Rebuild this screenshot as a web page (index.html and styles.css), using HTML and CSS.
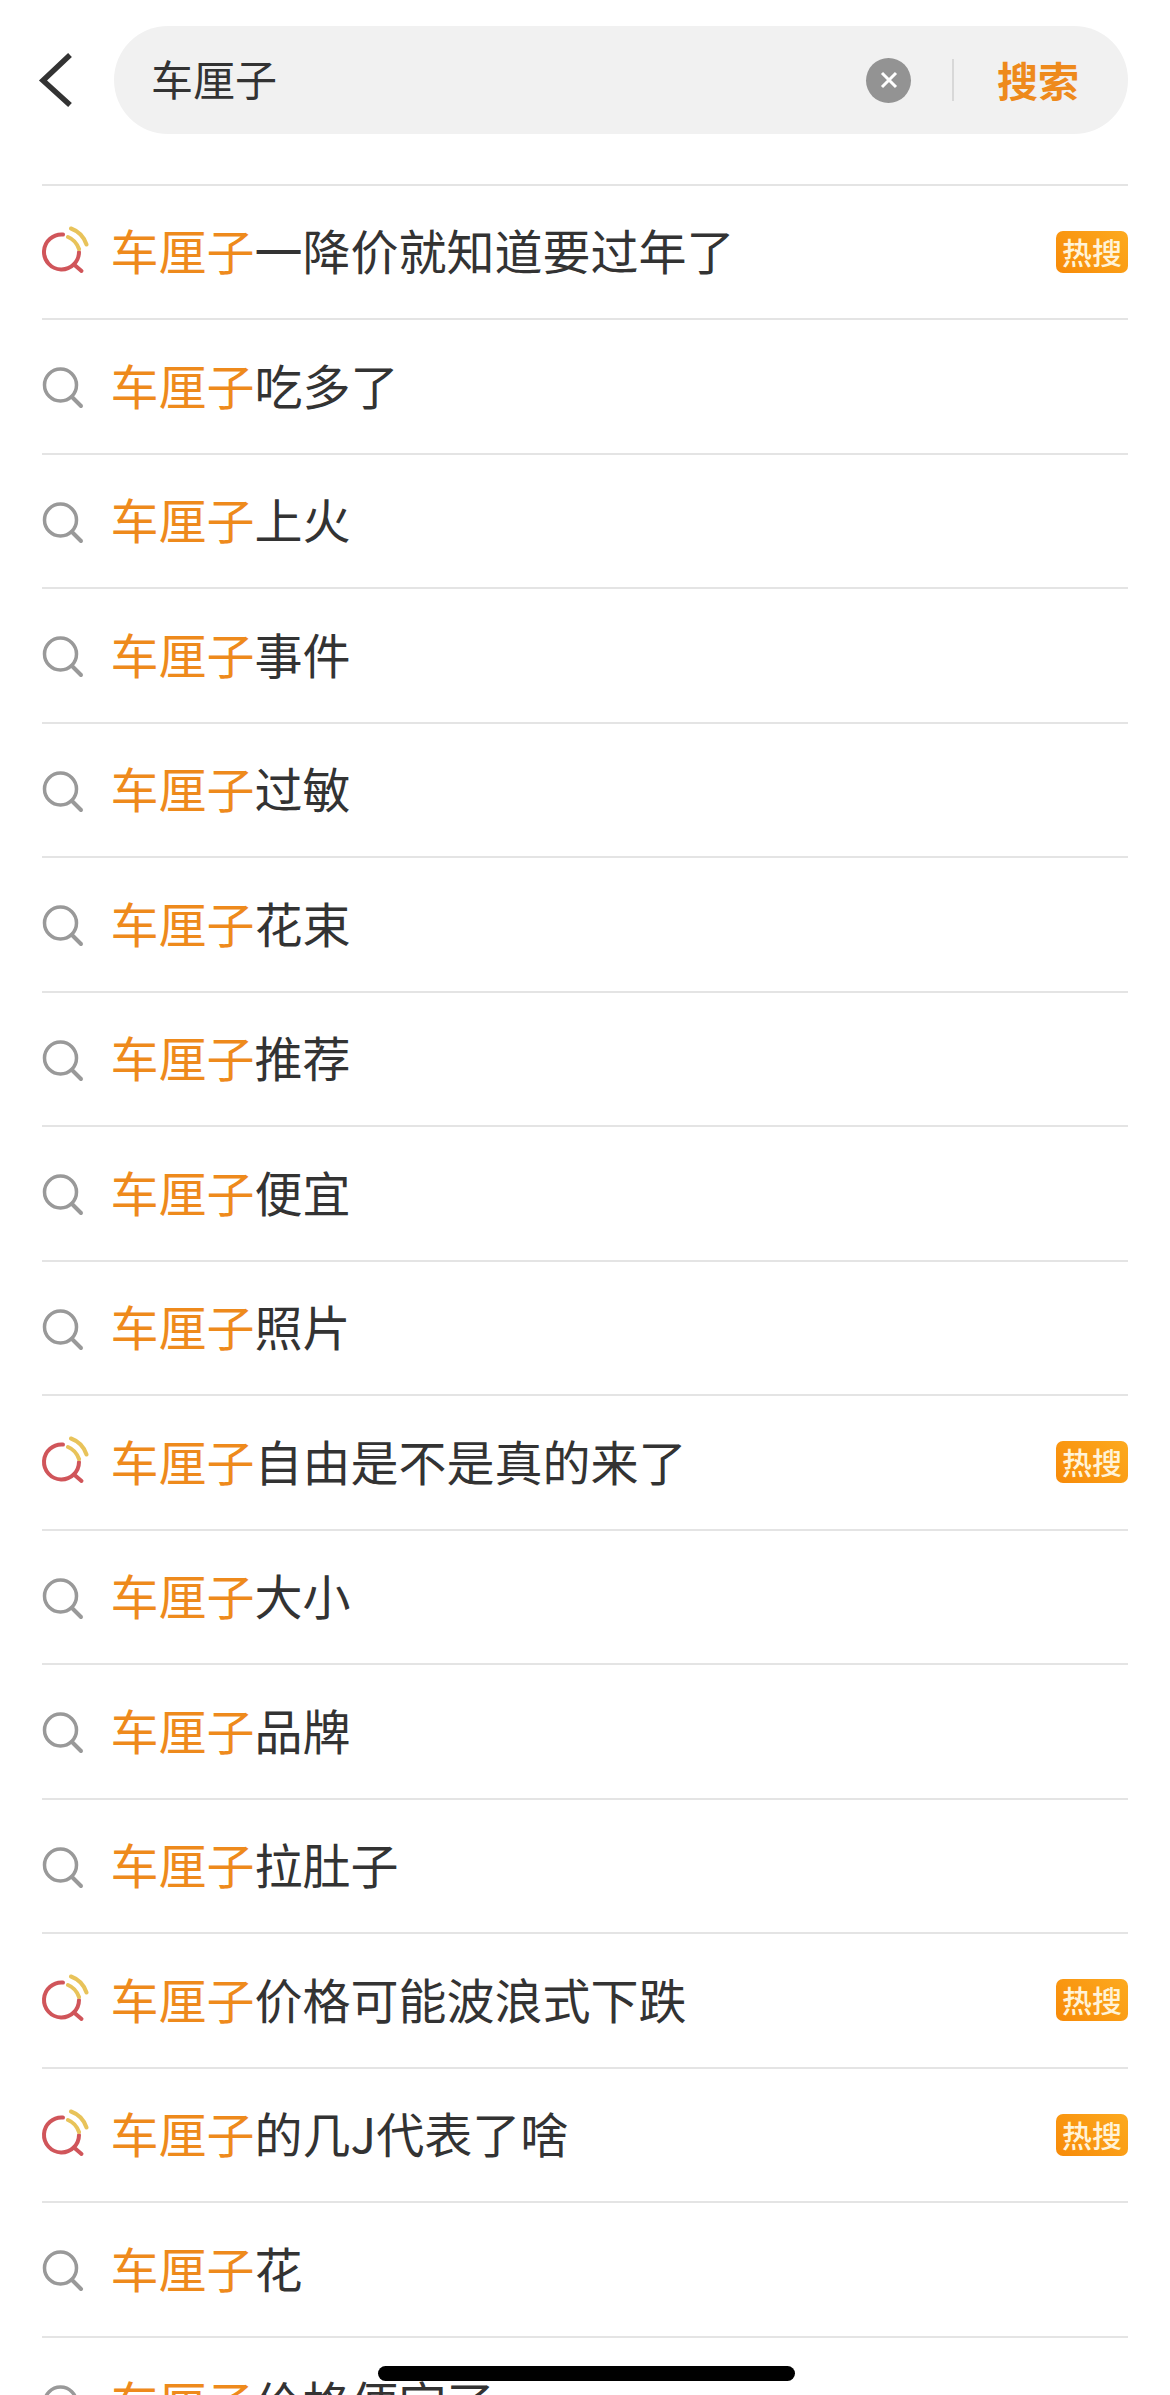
FILE: index.html
```html
<!DOCTYPE html>
<html lang="zh-CN">
<head>
    <meta charset="UTF-8">
    <title>搜索</title>
    <link rel="stylesheet" href="styles.css">
</head>
<body>
    <svg class="defs" width="0" height="0">
        <symbol id="icon-search" viewBox="0 0 52 52">
            <circle cx="20.500" cy="25" r="16" fill="none" stroke="#999" stroke-width="3.500"/>
            <path d="M32 37 41 46" fill="none" stroke="#999" stroke-width="4" stroke-linecap="round"/>
        </symbol>
        <symbol id="icon-hot" viewBox="0 0 52 52">
            <path d="M23 8.500A17.500 17.500 0 1 0 39 26" fill="none" stroke="#d0555a" stroke-width="4" stroke-linecap="round"/>
            <path d="M34 38.500 41.500 45" fill="none" stroke="#d0555a" stroke-width="4" stroke-linecap="round"/>
            <path d="M31 2.500C38 5 44 11 46.500 18.500M28 11C33 13 37 17.500 39 23" fill="none" stroke="#e8c35a" stroke-width="4" stroke-linecap="round"/>
        </symbol>
    </svg>

    <div class="page">
        <div class="search-bar">
            <svg class="back" width="40" height="60" viewBox="0 0 40 60">
                <path d="M34 5 7 30.500 34 55" fill="none" stroke="#333" stroke-width="5.500"/>
            </svg>
            <div class="search-box">
                <span class="query">车厘子</span>
                <span class="clear">
                    <svg width="18" height="18" viewBox="0 0 18 18">
                        <path d="M2 2 16 16M16 2 2 16" stroke="#fff" stroke-width="3"/>
                    </svg>
                </span>
                <span class="sep"></span>
                <span class="submit">搜索</span>
            </div>
        </div>

        <ul class="list">
            <li class="row"><svg class="icon"><use href="#icon-hot"/></svg><span class="label"><em>车厘子</em>一降价就知道要过年了</span><span class="badge">热搜</span></li>
            <li class="row"><svg class="icon"><use href="#icon-search"/></svg><span class="label"><em>车厘子</em>吃多了</span></li>
            <li class="row"><svg class="icon"><use href="#icon-search"/></svg><span class="label"><em>车厘子</em>上火</span></li>
            <li class="row"><svg class="icon"><use href="#icon-search"/></svg><span class="label"><em>车厘子</em>事件</span></li>
            <li class="row"><svg class="icon"><use href="#icon-search"/></svg><span class="label"><em>车厘子</em>过敏</span></li>
            <li class="row"><svg class="icon"><use href="#icon-search"/></svg><span class="label"><em>车厘子</em>花束</span></li>
            <li class="row"><svg class="icon"><use href="#icon-search"/></svg><span class="label"><em>车厘子</em>推荐</span></li>
            <li class="row"><svg class="icon"><use href="#icon-search"/></svg><span class="label"><em>车厘子</em>便宜</span></li>
            <li class="row"><svg class="icon"><use href="#icon-search"/></svg><span class="label"><em>车厘子</em>照片</span></li>
            <li class="row"><svg class="icon"><use href="#icon-hot"/></svg><span class="label"><em>车厘子</em>自由是不是真的来了</span><span class="badge">热搜</span></li>
            <li class="row"><svg class="icon"><use href="#icon-search"/></svg><span class="label"><em>车厘子</em>大小</span></li>
            <li class="row"><svg class="icon"><use href="#icon-search"/></svg><span class="label"><em>车厘子</em>品牌</span></li>
            <li class="row"><svg class="icon"><use href="#icon-search"/></svg><span class="label"><em>车厘子</em>拉肚子</span></li>
            <li class="row"><svg class="icon"><use href="#icon-hot"/></svg><span class="label"><em>车厘子</em>价格可能波浪式下跌</span><span class="badge">热搜</span></li>
            <li class="row"><svg class="icon"><use href="#icon-hot"/></svg><span class="label"><em>车厘子</em>的几J代表了啥</span><span class="badge">热搜</span></li>
            <li class="row"><svg class="icon"><use href="#icon-search"/></svg><span class="label"><em>车厘子</em>花</span></li>
            <li class="row"><svg class="icon"><use href="#icon-search"/></svg><span class="label"><em>车厘子</em>价格便宜了</span></li>
        </ul>
    </div>

    <div class="home-bar"></div>
</body>
</html>
```

FILE: styles.css
```css
* {
    margin: 0;
    padding: 0;
    box-sizing: border-box;
}

html, body {
    height: 100%;
    overflow: hidden;
}

body {
    position: relative;
    background: #fff;
    color: #333;
    font-family: "Noto Sans CJK SC", "Liberation Sans", sans-serif;
}

.defs {
    position: absolute;
}

.page {
    padding: 26px 42px 0;
}

/* Search bar */
.search-bar {
    display: flex;
    align-items: center;
    height: 108px;
    margin-bottom: 49.5px;
}

.back {
    flex: none;
    width: 40px;
    margin-left: -6px;
    margin-right: 38px;
}

.search-box {
    flex: 1;
    display: flex;
    align-items: center;
    height: 108px;
    padding: 0 49px 0 37px;
    background: #f1f1f1;
    border-radius: 54px;
}

.query {
    flex: 1;
    font-size: 42px;
    padding-bottom: 5px;
}

.clear {
    display: flex;
    align-items: center;
    justify-content: center;
    width: 45px;
    height: 45px;
    background: #939393;
    border-radius: 50%;
}

.sep {
    width: 2px;
    height: 42px;
    margin: 0 43px 0 41px;
    background: #d8d8d8;
}

.submit {
    font-size: 41px;
    font-weight: 700;
    color: #ee8a1c;
    padding-bottom: 3px;
}

/* Suggestion list */
.list {
    list-style: none;
    border-top: 2px solid #e4e4e4;
}

.row {
    display: flex;
    align-items: center;
    height: 134.5px;
    border-bottom: 2px solid #e4e4e4;
}

.icon {
    flex: none;
    width: 52px;
    height: 52px;
    margin-left: -2px;
    margin-right: 18.5px;
}

.label {
    flex: 1;
    font-size: 48px;
    white-space: nowrap;
    padding-bottom: 5px;
}

.label em {
    font-style: normal;
    color: #ee8a1c;
}

.badge {
    width: 72px;
    height: 42px;
    line-height: 40px;
    text-align: center;
    font-size: 30px;
    font-weight: 500;
    color: #fff3d8;
    background: linear-gradient(45deg, #f78a08, #fdaa1f);
    border-radius: 7px;
}

.home-bar {
    position: absolute;
    left: 378px;
    top: 2366px;
    width: 417px;
    height: 15px;
    background: #000;
    border-radius: 8px;
}
```
